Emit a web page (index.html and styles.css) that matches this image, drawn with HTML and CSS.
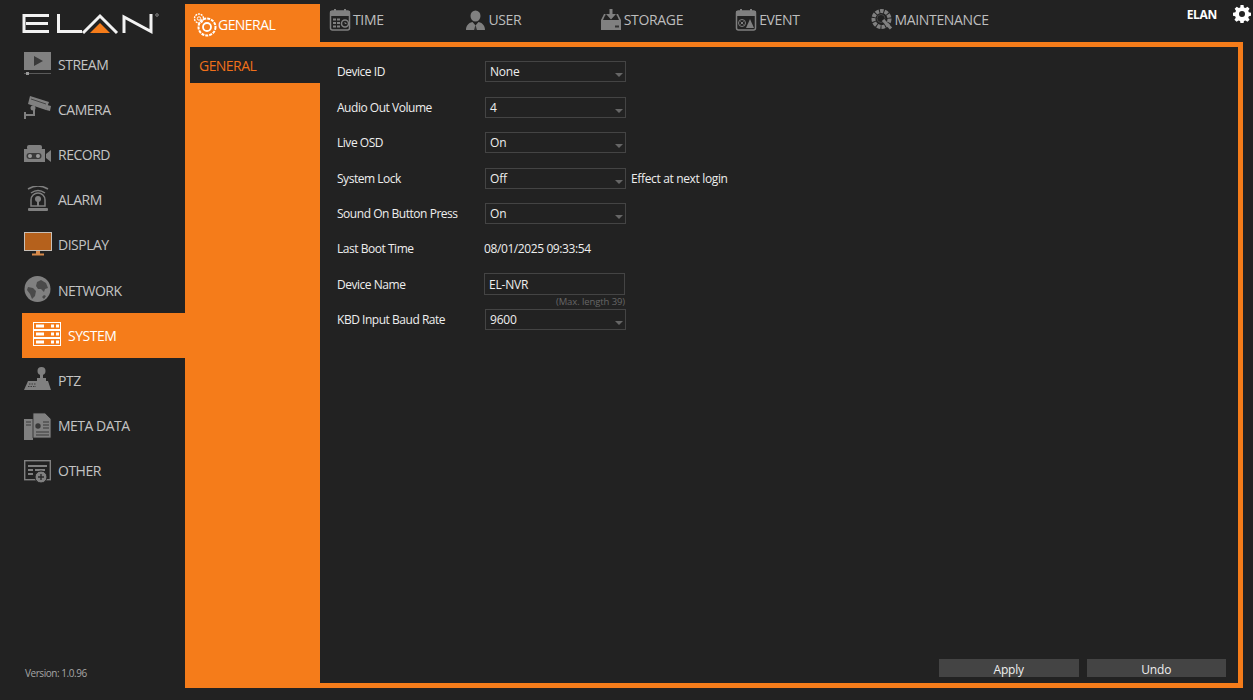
FILE: index.html
```html
<!DOCTYPE html>
<html lang="en">
<head>
<meta charset="utf-8">
<title>ELAN NVR - System</title>
<link rel="stylesheet" href="styles.css">
</head>
<body>
<div class="app">
  <aside class="side">
    <div class="logo">
      <svg width="140" height="24" viewBox="0 0 140 24" fill="none" stroke="#f2f2f2" stroke-width="3">
        <path d="M29 4.500H4V20.500H29M6 12.500H28"/>
        <path d="M38.500 3V20.500H62"/>
        <path d="M63 22L80 5 97 22"/>
        <path d="M70 22H90L80 12Z" fill="#f57c1a" stroke="none"/>
        <path d="M104 22V6L131 20.500V3"/>
        <circle cx="137" cy="4" r="1.300" stroke-width=".7" stroke="#aaa"/>
      </svg>
    </div>
    <nav class="side-nav">
      <a class="side-item">
        <svg class="side-icon" viewBox="0 0 28 28"><rect y="2" width="27" height="18" fill="#808080"/><path d="M10 6l9 5-9 5z" fill="#3a3a3a"/><path d="M0 23.500H27" stroke="#5a5a5a"/><rect x="2" y="22" width="3" height="3" fill="#999"/></svg>
        <span>STREAM</span>
      </a>
      <a class="side-item">
        <svg class="side-icon" viewBox="0 0 28 28"><path d="M6 1l19 6-3 8-18-6z" fill="#808080"/><path d="M7 4l15 5" stroke="#444"/><path d="M23 10l4 1-1 5-4-1z" fill="#808080"/><path d="M1 24v-7M1 20h9v-6" stroke="#808080" stroke-width="2" fill="none"/><circle cx="9" cy="13" r="2.500" fill="#808080"/></svg>
        <span>CAMERA</span>
      </a>
      <a class="side-item">
        <svg class="side-icon" viewBox="0 0 28 28"><rect x="3" y="4" width="15" height="5" rx="2" fill="#808080"/><rect y="8" width="21" height="13" fill="#808080"/><path d="M22 13l5-4v12l-5-4z" fill="#808080"/><rect x="2.500" y="12" width="15" height="6" rx="3" fill="#3a3a3a"/><circle cx="6" cy="15" r="2" fill="#9a9a9a"/><circle cx="14" cy="15" r="2" fill="#9a9a9a"/></svg>
        <span>RECORD</span>
      </a>
      <a class="side-item">
        <svg class="side-icon" viewBox="0 0 28 28"><g fill="none" stroke="#808080" stroke-width="1.500"><path d="M4 3Q14-3 24 3"/><path d="M7 7Q14 2 21 7"/><path d="M7 20v-6a7 7 0 0 1 14 0v6z"/></g><circle cx="14" cy="13" r="3" fill="#808080"/><rect x="13" y="14" width="2" height="6" fill="#808080"/><rect x="4" y="22" width="20" height="3" rx="1" fill="#808080"/></svg>
        <span>ALARM</span>
      </a>
      <a class="side-item">
        <svg class="side-icon" viewBox="0 0 28 28"><rect x=".5" y="1.500" width="27" height="18" fill="#b5611c" stroke="#c8c0b8"/><rect x="12" y="20" width="4" height="3" fill="#d88a4a"/><rect x="8" y="22.500" width="12" height="2" fill="#d88a4a"/></svg>
        <span>DISPLAY</span>
      </a>
      <a class="side-item">
        <svg class="side-icon" viewBox="0 0 28 28"><circle cx="13.500" cy="13" r="13" fill="#808080"/><path d="M13 6l4-2 5 3 2 5-3 1-1 3-3-3-3 0-2-3zM4 11l5 1 3 3-1 5-3 3-2-5-3-4zM20 19l2 1-2 3-2-2z" fill="#4a4a4a"/></svg>
        <span>NETWORK</span>
      </a>
      <a class="side-item active">
        <svg class="side-icon" viewBox="0 0 28 28"><g fill="none" stroke="#fff"><rect x=".5" y="1.500" width="27" height="7"/><rect x=".5" y="9.500" width="27" height="7"/><rect x=".5" y="17.500" width="27" height="7"/></g><g fill="#fff"><rect x="3" y="3.500" width="8" height="3"/><rect x="18" y="3.500" width="3" height="3"/><rect x="23" y="3.500" width="3" height="3"/><rect x="3" y="11.500" width="8" height="3"/><rect x="18" y="11.500" width="3" height="3"/><rect x="23" y="11.500" width="3" height="3"/><rect x="3" y="19.500" width="8" height="3"/><rect x="18" y="19.500" width="3" height="3"/><rect x="23" y="19.500" width="3" height="3"/></g></svg>
        <span>SYSTEM</span>
      </a>
      <a class="side-item">
        <svg class="side-icon" viewBox="0 0 28 28"><circle cx="17.500" cy="5" r="4" fill="#808080"/><rect x="16" y="7" width="3" height="9" fill="#808080"/><rect x="13" y="12" width="9" height="4" fill="#808080"/><path d="M4 15h20l3 9H0z" fill="#808080"/><path d="M5 18h7M4 20.500h8" stroke="#3a3a3a" stroke-dasharray="1.500 1"/></svg>
        <span>PTZ</span>
      </a>
      <a class="side-item">
        <svg class="side-icon" viewBox="0 0 28 28"><path d="M0 7h9v21H0z" fill="#808080"/><path d="M2 10h5M2 13h5" stroke="#3a3a3a"/><path d="M9 1h12l6 6v19H9z" fill="#808080" stroke="#2a2a2a" stroke-width=".8"/><circle cx="14" cy="14" r="2.700" fill="#383838"/><path d="M19 10h6M19 13h6M19 16h6M12 20h13M12 23h13" stroke="#383838"/></svg>
        <span>META DATA</span>
      </a>
      <a class="side-item">
        <svg class="side-icon" viewBox="0 0 28 28"><rect x=".7" y="3.700" width="25.600" height="19" fill="none" stroke="#808080" stroke-width="1.400"/><path d="M4 8h19v2H4zM4 12h5v2H4zM11 12h10v2H11zM4 16h5v2H4z" fill="#808080"/><circle cx="17" cy="20" r="6" fill="#808080" stroke="#222"/><path d="M17 17v6M14 20h6" stroke="#2a2a2a" stroke-width="1.400"/></svg>
        <span>OTHER</span>
      </a>
    </nav>
    <div class="version">Version: 1.0.96</div>
  </aside>

  <main class="main">
    <header class="topbar">
      <a class="tab active">
        <svg class="tab-icon tab-icon-gen" viewBox="0 0 24 24" fill="none" stroke="#fff"><circle cx="6" cy="5.500" r="4.500" stroke-width="1.400" stroke-dasharray="2 .8"/><circle cx="6" cy="5.500" r="1.700"/><circle cx="14" cy="14" r="8.500" stroke-width="2" stroke-dasharray="3 1"/><circle cx="14" cy="14" r="4" stroke-width="1.800"/></svg>
        <span>GENERAL</span>
      </a>
      <a class="tab">
        <svg class="tab-icon" viewBox="0 0 24 24"><rect x="2.500" y="3" width="19" height="19" rx="2" fill="none" stroke="#808080" stroke-width="1.500"/><path d="M2 3h20v5H2zM6 1h2v4H6zM16 1h2v4h-2z" fill="#808080"/><path d="M5 10.500h3v2H5zM5 14h3v2H5zM5 17.500h3v2H5zM9 10.500h3v2H9zM9 14h3v2H9zM9 17.500h3v2H9z" fill="#808080"/><circle cx="17" cy="15.500" r="3.500" fill="none" stroke="#808080" stroke-width="1.500"/><path d="M17 14v1.500h1.500" fill="none" stroke="#808080"/></svg>
        <span>TIME</span>
      </a>
      <a class="tab">
        <svg class="tab-icon" viewBox="0 0 24 24"><ellipse cx="12.500" cy="8" rx="5" ry="5.500" fill="#808080"/><path d="M3 22c0-4 2-7 6.500-8l3 3.500 3-3.500c4.500 1 6.500 4 6.500 8z" fill="#808080"/><path d="M12.500 17l-1.500 5h3z" fill="#333"/></svg>
        <span>USER</span>
      </a>
      <a class="tab">
        <svg class="tab-icon" viewBox="0 0 24 24"><path d="M6.500 6H5L2 12v10h20V12l-3-6h-1.500v1.500h.5l2 4.500H4l2-4.500h.5z" fill="#808080"/><path d="M2 13h20v9H2z" fill="#808080"/><path d="M10.500 1h3v5H17l-5 5.500L7 6h3.500z" fill="#808080"/><rect x="16" y="17.500" width="4" height="2" fill="#333"/></svg>
        <span>STORAGE</span>
      </a>
      <a class="tab">
        <svg class="tab-icon" viewBox="0 0 24 24"><rect x="2.500" y="3" width="19" height="19" rx="2" fill="none" stroke="#808080" stroke-width="1.500"/><path d="M2 3h20v5H2zM6 1h2v4H6zM16 1h2v4h-2z" fill="#808080"/><circle cx="8" cy="15" r="3.500" fill="none" stroke="#808080"/><path d="M6.500 13.500l3 3M9.500 13.500l-3 3" stroke="#808080"/><path d="M16 11l4 9h-8z" fill="#808080"/></svg>
        <span>EVENT</span>
      </a>
      <a class="tab">
        <svg class="tab-icon" viewBox="0 0 24 24" fill="none" stroke="#808080"><circle cx="11.500" cy="11" r="8" stroke-width="4" stroke-dasharray="3.500 1"/><circle cx="11" cy="10.500" r="4" stroke="#444" stroke-width="1"/><path d="M13 12l8 8.500" stroke-width="3.200"/></svg>
        <span>MAINTENANCE</span>
      </a>
      <div class="account">
        <span class="account-name">ELAN</span>
        <svg class="gear" viewBox="0 0 24 24"><path fill="#fff" d="M10 1h4l.6 3.200 2 .8L19.300 3.200l2.800 2.800-1.800 2.700.8 2 3.200.6v4l-3.200.6-.8 2 1.800 2.700-2.800 2.800-2.700-1.800-2 .8-.6 3.200h-4l-.6-3.200-2-.8-2.700 1.800-2.800-2.800 1.800-2.700-.8-2L0 15.300v-4l3.200-.6.800-2L2.200 6 5 3.200 7.700 5l2-.8zM12 9a4 4 0 1 0 0 8 4 4 0 0 0 0-8z" fill-rule="evenodd" transform="translate(0 -1)"/></svg>
      </div>
    </header>

    <section class="frame">
      <div class="subnav">
        <a class="subtab">GENERAL</a>
      </div>
      <div class="panel">
        <form class="form">
          <div class="row">
            <label>Device ID</label>
            <div class="select">None</div>
          </div>
          <div class="row">
            <label>Audio Out Volume</label>
            <div class="select">4</div>
          </div>
          <div class="row">
            <label>Live OSD</label>
            <div class="select">On</div>
          </div>
          <div class="row">
            <label>System Lock</label>
            <div class="select">Off</div>
            <span class="note">Effect at next login</span>
          </div>
          <div class="row">
            <label>Sound On Button Press</label>
            <div class="select">On</div>
          </div>
          <div class="row">
            <label>Last Boot Time</label>
            <span class="value">08/01/2025 09:33:54</span>
          </div>
          <div class="row">
            <label>Device Name</label>
            <div class="input-wrap">
              <div class="input">EL-NVR</div>
              <span class="hint">(Max. length 39)</span>
            </div>
          </div>
          <div class="row">
            <label>KBD Input Baud Rate</label>
            <div class="select">9600</div>
          </div>
        </form>
        <div class="actions">
          <button type="button" class="btn">Apply</button>
          <button type="button" class="btn">Undo</button>
        </div>
      </div>
    </section>
  </main>
</div>
</body>
</html>
```

FILE: styles.css
```css
* { box-sizing: border-box; }
html, body { margin: 0; height: 100%; overflow: hidden; }
body {
  background: #222;
  color: #eee;
  font-family: "Open Sans", "Noto Sans", sans-serif;
  font-size: 12px;
}
a { color: inherit; text-decoration: none; }

.app { display: flex; height: 700px; }

/* sidebar */
.side { position: relative; width: 185px; flex: none; display: flex; flex-direction: column; }
.logo { height: 41.7px; padding: 11px 0 0 20px; }
.logo svg { display: block; }
.side-nav { display: flex; flex-direction: column; padding-left: 22px; }
.side-item {
  display: flex;
  align-items: center;
  height: 45.17px;
  padding-left: 2px;
  gap: 6px;
  font-size: 14px;
  letter-spacing: -.5px;
  color: #c4c4c4;
}
.side-item.active { background: #f57c1a; color: #fff; padding-left: 11px; gap: 7px; }
.side-icon { width: 28px; height: 28px; flex: none; }
.version { margin-top: auto; padding: 0 0 20px 25px; font-size: 10px; letter-spacing: -.45px; color: #a6a6a6; }

/* top */
.main { flex: 1; min-width: 0; padding: 4px 10px 12px 0; display: flex; flex-direction: column; }
.topbar { height: 38px; display: flex; flex: none; position: relative; }
.tab {
  width: 135.4px;
  flex: none;
  display: flex;
  align-items: flex-start;
  gap: 1px;
  padding: 4px 0 0 10px;
  font-size: 14px;
  line-height: 24px;
  letter-spacing: -.35px;
  color: #bdbdbd;
}
.tab.active { background: #f57c1a; color: #fff; padding: 9px 0 0 8px; width: 135px; letter-spacing: -.55px; }
.tab-icon { width: 24px; height: 24px; flex: none; margin-left: -2px; }
.tab-icon-gen { margin-left: 0; }
.account {
  position: absolute;
  top: 0;
  right: -8px;
  display: flex;
  align-items: flex-start;
  gap: 16px;
}
.account-name { font-size: 12px; font-weight: 700; color: #fff; line-height: 21px; letter-spacing: -.3px; }
.gear { width: 18px; height: 18px; margin-top: 1px; }

/* frame */
.frame { flex: 1; display: flex; background: #f57c1a; padding: 5px 5px 5px 0; min-height: 0; }
.subnav { width: 135px; flex: none; padding-left: 5px; }
.subtab {
  display: block;
  height: 36px;
  line-height: 37px;
  padding-left: 9px;
  background: #222;
  color: #f0701a;
  font-size: 14px;
  letter-spacing: -.55px;
}
.panel { flex: 1; background: #222; display: flex; flex-direction: column; min-width: 0; }
.form { padding: 7.3px 0 0 17px; }
.row { display: flex; align-items: center; height: 35.4px; }
.row label { width: 148px; flex: none; letter-spacing: -.47px; }
.select {
  position: relative;
  width: 141px;
  height: 21px;
  line-height: 19px;
  padding-left: 4px;
  border: 1px solid #444;
  letter-spacing: -.2px;
}
.select::after {
  content: "";
  position: absolute;
  right: 2px;
  bottom: 4px;
  border: 4px solid transparent;
  border-top-color: #666;
  border-bottom: 0;
}
.note { margin-left: 5px; letter-spacing: -.35px; }
.value { margin-left: -1px; letter-spacing: -.4px; }
.input-wrap { position: relative; margin-left: -1px; }
.input {
  width: 141px;
  height: 22px;
  line-height: 21px;
  padding-left: 4px;
  border: 1px solid #444;
  letter-spacing: -.2px;
}
.hint {
  position: absolute;
  top: 100%;
  right: 0;
  font-size: 9.5px;
  line-height: 14px;
  letter-spacing: -.1px;
  color: #666;
  white-space: nowrap;
}
.actions { margin-top: auto; display: flex; justify-content: flex-end; gap: 8px; padding: 0 12px 6px 0; }
.btn {
  width: 139.500px;
  height: 18px;
  padding: 2px 0 0;
  border: 0;
  background: #444;
  color: #eee;
  font: inherit;
  line-height: 18px;
  letter-spacing: -.2px;
  overflow: visible;
}
```
